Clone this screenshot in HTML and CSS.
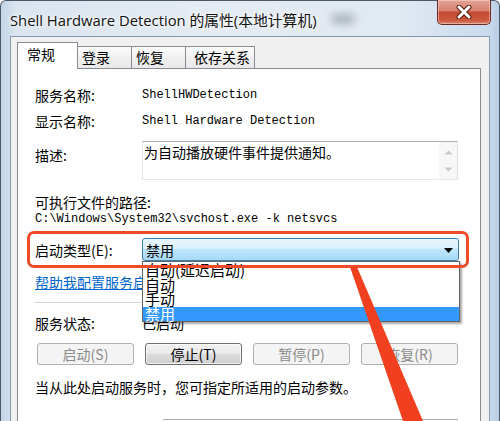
FILE: index.html
```html
<!DOCTYPE html>
<html lang="zh-CN">
<head>
<meta charset="utf-8">
<title>Shell Hardware Detection 的属性</title>
<link rel="stylesheet" href="styles.css">
</head>
<body>
<div class="window">
  <div class="titlebar">
    <span class="title">Shell Hardware Detection 的属性(本地计算机)</span>
    <span class="smudge"></span>
    <div class="close">
      <svg width="20" height="14" viewBox="0 0 20 14">
        <path d="M5 2 L15 12 M15 2 L5 12" stroke="#5a1a12" stroke-width="5" stroke-linecap="round"/>
        <path d="M5 2 L15 12 M15 2 L5 12" stroke="#ffffff" stroke-width="3" stroke-linecap="round"/>
      </svg>
    </div>
  </div>
  <div class="client">
    <div class="tabs">
      <div class="tab tab-active">常规</div>
      <div class="tab">登录</div>
      <div class="tab">恢复</div>
      <div class="tab tab-last">依存关系</div>
    </div>
    <div class="panel">
      <div class="row"><span class="label">服务名称:</span><span class="mono">ShellHWDetection</span></div>
      <div class="row"><span class="label">显示名称:</span><span class="mono">Shell Hardware Detection</span></div>
      <div class="row row-desc">
        <span class="label label-desc">描述:</span>
        <div class="desc-box">
          <div class="desc-text">为自动播放硬件事件提供通知。</div>
          <div class="scroll">
            <svg width="9" height="5" viewBox="0 0 9 5"><path d="M0.5 4.5 L4.5 0.5 L8.5 4.5 Z" fill="#c4c8cc"/></svg>
            <svg width="9" height="5" viewBox="0 0 9 5"><path d="M0.5 0.5 L4.5 4.5 L8.5 0.5 Z" fill="#c4c8cc"/></svg>
          </div>
        </div>
      </div>
      <div class="block-label">可执行文件的路径:</div>
      <div class="path mono">C:\Windows\System32\svchost.exe -k netsvcs</div>
      <div class="row row-startup">
        <span class="label">启动类型(E):</span>
        <div class="combo">
          <span class="combo-text">禁用</span>
          <svg class="combo-arrow" width="9" height="5" viewBox="0 0 9 5"><path d="M0 0 L9 0 L4.5 5 Z" fill="#000"/></svg>
          <ul class="dropdown">
            <li class="option">自动(延迟启动)</li>
            <li class="option">自动</li>
            <li class="option">手动</li>
            <li class="option option-selected">禁用</li>
          </ul>
        </div>
      </div>
      <a class="help-link" href="#">帮助我配置服务启动选项。</a>
      <div class="separator"></div>
      <div class="row row-status"><span class="label">服务状态:</span><span>已启动</span></div>
      <div class="buttons">
        <div class="btn btn-disabled">启动(S)</div>
        <div class="btn">停止(T)</div>
        <div class="btn btn-disabled">暂停(P)</div>
        <div class="btn btn-disabled">恢复(R)</div>
      </div>
      <div class="hint">当从此处启动服务时，您可指定所适用的启动参数。</div>
      <div class="row row-param">
        <span class="label label-param"></span>
        <div class="param-input"></div>
      </div>
    </div>
  </div>
</div>
<svg class="annotation-arrow" width="500" height="421" viewBox="0 0 500 421">
  <polygon points="350,267 357,267 423,421 403,421" fill="#f0401f"/>
</svg>
</body>
</html>
```
FILE: styles.css
```css
html, body {
  margin: 0;
  padding: 0;
}
body {
  position: relative;
  width: 500px;
  height: 421px;
  overflow: hidden;
  font-family: "Noto Sans CJK SC", "Noto Sans", sans-serif;
  font-size: 14px;
  color: #000;
  background: #ffffff;
}
.window {
  box-sizing: border-box;
  width: 500px;
  height: 421px;
  border: 1px solid #4d5866;
  border-bottom: none;
  border-radius: 6px 6px 0 0;
  background: linear-gradient(to right, #c3d4e8 0%, #dae4ef 3%, #e4ebf2 40%, #e1e9f1 80%, #c8daee 98%, #b9cde4 100%);
  padding: 0 9px;
  display: flex;
  flex-direction: column;
}
.titlebar {
  height: 35px;
  flex: none;
  display: flex;
  align-items: flex-start;
}
.title {
  margin-top: 9px;
  font-family: "Open Sans", "Noto Sans CJK SC", sans-serif;
  font-size: 14.8px;
  line-height: 20px;
  color: #111;
  white-space: nowrap;
  text-shadow: 0 0 6px #ffffff, 0 0 3px #ffffff;
}
.smudge {
  width: 24px;
  height: 10px;
  margin: 13px 0 0 14px;
  background: #7d858f;
  border-radius: 5px;
  filter: blur(4px);
  opacity: 0.55;
}
.close {
  margin-left: auto;
  margin-right: -1px;
  margin-top: -1px;
  width: 54px;
  height: 25px;
  box-sizing: border-box;
  border: 1px solid #6b2a22;
  border-top: none;
  border-radius: 0 0 5px 5px;
  background: linear-gradient(#e3a496 0%, #d6806d 45%, #c44a31 50%, #cb5a3e 85%, #d98770 100%);
  display: flex;
  align-items: center;
  justify-content: center;
  box-shadow: inset 0 0 0 1px rgba(255, 220, 210, 0.5);
}
.client {
  flex: 1;
  background: #f0f0f0;
  border: 1px solid #8798ad;
  border-bottom: none;
  padding: 5px 8px 0 6px;
  display: flex;
  flex-direction: column;
  min-height: 0;
}
.tabs {
  display: flex;
  align-items: flex-end;
  height: 26px;
  flex: none;
  position: relative;
  z-index: 1;
}
.tab {
  box-sizing: border-box;
  height: 22px;
  line-height: 21px;
  padding: 0 21px 0 4px;
  margin-left: -1px;
  border: 1px solid #898c95;
  border-bottom: none;
  background: linear-gradient(#fbfbfb, #f1f1f1 50%, #e8e8e8);
  font-size: 14px;
  white-space: nowrap;
}
.tab-last {
  padding: 0 4px 0 8px;
}
.tab-active {
  margin-left: 0;
  height: 27px;
  margin-bottom: -1px;
  line-height: 23px;
  padding: 0 22px 0 9px;
  background: #ffffff;
}
.panel {
  flex: 1;
  background: #ffffff;
  border: 1px solid #898c95;
  padding: 13px 21px 0 17px;
}
.row {
  display: flex;
  align-items: center;
  height: 26px;
}
.label {
  width: 107px;
  flex: none;
  white-space: nowrap;
}
.mono {
  font-family: "Liberation Mono", "DejaVu Sans Mono", monospace;
  font-size: 12px;
  white-space: pre;
}
.row-desc {
  height: auto;
  align-items: flex-start;
  margin-top: 7px;
}
.label-desc {
  padding-top: 4px;
  line-height: 20px;
}
.desc-box {
  flex: 1;
  height: 39px;
  box-sizing: border-box;
  border: 1px solid;
  border-color: #abadb3 #dbdfe6 #e3e9ef #e2e3ea;
  margin-right: 1px;
  display: flex;
  background: #fff;
}
.desc-text {
  flex: 1;
  line-height: 20px;
  padding-left: 1px;
  font-size: 14px;
}
.scroll {
  width: 18px;
  background: #f7f7f7;
  display: flex;
  flex-direction: column;
  align-items: center;
  justify-content: space-between;
  padding: 8px 0 7px;
  box-sizing: border-box;
}
.block-label {
  margin-top: 13px;
  line-height: 18px;
}
.path {
  display: block;
  line-height: 16px;
}
.row-startup {
  position: relative;
  margin-top: 11px;
  height: 23px;
}
.row-startup::after {
  content: "";
  position: absolute;
  left: -8px;
  top: -7px;
  right: -10px;
  bottom: -7px;
  border: 3px solid #f04a2a;
  border-radius: 7px;
  z-index: 3;
  pointer-events: none;
}
.combo {
  position: relative;
  flex: 1;
  height: 23px;
  box-sizing: border-box;
  border: 1px solid #3c7fb1;
  border-radius: 3px;
  background: linear-gradient(#eaf6fd 0%, #d9f0fc 45%, #bee6fd 50%, #a7d9f5 100%);
  display: flex;
  align-items: center;
  padding-left: 3px;
}
.combo-text {
  flex: 1;
  line-height: 20px;
}
.combo-arrow {
  margin-right: 5px;
  margin-top: 1px;
}
.dropdown {
  position: absolute;
  left: -1px;
  right: -2px;
  top: calc(100% + 1px);
  height: 61px;
  box-sizing: border-box;
  margin: 0;
  padding: 1px 0 0;
  list-style: none;
  background: #ffffff;
  border: 1px solid #646464;
  box-shadow: 2px 2px 2px rgba(0, 0, 0, 0.35);
  z-index: 2;
}
.option {
  font-size: 15px;
  line-height: 14.5px;
  height: 14.5px;
  padding-left: 2px;
  white-space: nowrap;
}
.option-selected {
  background: #3399ff;
  color: #ffffff;
}
.help-link {
  display: block;
  margin-top: 12px;
  line-height: 18px;
  color: #0066cc;
  text-decoration: underline;
  white-space: nowrap;
}
.separator {
  margin-top: 11px;
  height: 0;
  border-top: 1px solid #d5d5d5;
}
.row-status {
  margin-top: 11px;
  height: 18px;
}
.buttons {
  margin-top: 11px;
  display: grid;
  grid-template-columns: repeat(4, 1fr);
  gap: 11px;
  padding: 0 1px 0 2px;
}
.btn {
  height: 22px;
  box-sizing: border-box;
  border: 1px solid #707070;
  border-radius: 3px;
  background: linear-gradient(#f2f2f2 0%, #ebebeb 45%, #dddddd 50%, #cfcfcf 100%);
  box-shadow: inset 0 0 0 1px rgba(255, 255, 255, 0.7);
  text-align: center;
  line-height: 20px;
  font-size: 14px;
}
.btn-disabled {
  border-color: #adb2b5;
  background: #f4f4f4;
  color: #8a8a8a;
  box-shadow: none;
}
.hint {
  margin-top: 12px;
  line-height: 20px;
  white-space: nowrap;
}
.row-param {
  margin-top: 22px;
  align-items: flex-start;
}
.label-param {
  width: 128px;
}
.param-input {
  flex: 1;
  height: 22px;
  box-sizing: border-box;
  border: 1px solid;
  border-color: #abadb3 #dbdfe6 #e3e9ef #e2e3ea;
  margin-right: 1px;
}
.annotation-arrow {
  position: absolute;
  left: 0;
  top: 0;
  z-index: 5;
  pointer-events: none;
}
```
